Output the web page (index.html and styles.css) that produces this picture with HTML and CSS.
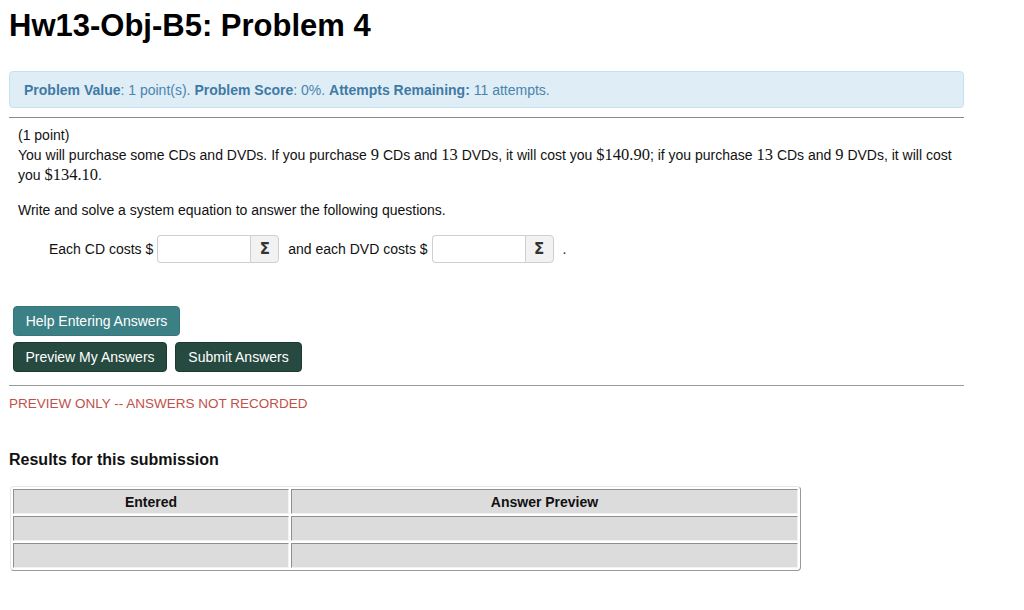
FILE: index.html
```html
<!DOCTYPE html>
<html lang="en">
<head>
  <meta charset="UTF-8" />
  <title>Hw13-Obj-B5: Problem 4</title>
  <link rel="stylesheet" href="styles.css">
</head>
<body>

  <h1 class="title">Hw13-Obj-B5: Problem 4</h1>

  <div class="info-box">
    <b>Problem Value</b>: 1 point(s). <b>Problem Score</b>: 0%. <b>Attempts Remaining:</b> 11 attempts.
  </div>

  <hr class="rule">

  <div class="problem">
    <div>(1 point)</div>
    <div class="problem-text">
      You will purchase some CDs and DVDs. If you purchase <span class="math">9</span> CDs and <span class="math">13</span> DVDs, it will cost you <span class="math">$140.90</span>; if you purchase <span class="math">13</span> CDs and <span class="math">9</span> DVDs, it will cost you <span class="math">$134.10</span>.
    </div>
    <p class="instructions">Write and solve a system equation to answer the following questions.</p>

    <div class="answer-row">
      <span>Each CD costs $</span>
      <span class="answer-group">
        <input type="text" class="answer-input">
        <button class="sigma-btn">&Sigma;</button>
      </span>
      <span>and each DVD costs $</span>
      <span class="answer-group">
        <input type="text" class="answer-input">
        <button class="sigma-btn">&Sigma;</button>
      </span>
      <span>.</span>
    </div>
  </div>

  <div class="buttons">
    <div><button class="btn btn-help">Help Entering Answers</button></div>
    <div class="btn-row">
      <button class="btn btn-dark">Preview My Answers</button>
      <button class="btn btn-dark">Submit Answers</button>
    </div>
  </div>

  <hr class="rule rule-second">

  <div class="preview-msg">PREVIEW ONLY -- ANSWERS NOT RECORDED</div>

  <h3 class="results-title">Results for this submission</h3>

  <table class="results">
    <tr>
      <th class="col-entered">Entered</th>
      <th>Answer Preview</th>
    </tr>
    <tr><td></td><td></td></tr>
    <tr><td></td><td></td></tr>
  </table>

</body>
</html>
```

FILE: styles.css
```css
body {
  margin: 0;
  padding: 0 9px;
  font-family: "Liberation Sans", Arial, sans-serif;
  font-size: 14px;
  color: #222;
  background-color: white;
  width: 955px;
}

.title {
  font-size: 31px;
  font-weight: bold;
  color: #000;
  margin: 9px 0 0 0;
  line-height: 34px;
}

.info-box {
  margin-top: 28px;
  height: 35px;
  line-height: 36px;
  padding: 0 14px;
  background-color: #dfedf7;
  border: 1px solid #c4e3ef;
  border-radius: 4px;
  color: #4a84ad;
}

.info-box b {
  color: #3f7aa4;
}

.rule {
  border: none;
  border-top: 1px solid #8a8a8a;
  margin: 9px 0 0 0;
}

.problem {
  padding: 7px 9px 0 9px;
  line-height: 20px;
  color: #111;
}

.math {
  display: inline-block;
  font-family: "Liberation Serif", "Times New Roman", serif;
  font-size: 16.5px;
  line-height: 16px;
}

.instructions {
  margin: 15px 0 0 0;
}

.answer-row {
  display: flex;
  align-items: center;
  gap: 4px;
  margin: 15px 0 0 31px;
}

.answer-group {
  display: inline-flex;
  height: 28px;
  margin-right: 5px;
}

.answer-input {
  width: 91px;
  height: 26px;
  padding: 0 0 0 1px;
  border: 1px solid #cfcfcf;
  border-right: none;
  border-radius: 4px 0 0 4px;
  margin: 0;
  box-sizing: content-box;
}

.sigma-btn {
  width: 29px;
  height: 28px;
  margin: 0;
  border: 1px solid #cfcfcf;
  border-radius: 0 4px 4px 0;
  background-color: #f2f2f2;
  font-family: "DejaVu Sans", sans-serif;
  font-size: 15px;
  font-weight: bold;
  color: #333;
  padding: 0;
}

.buttons {
  margin-top: 43px;
  padding-left: 4px;
}

.btn-row {
  display: flex;
  gap: 8px;
  margin-top: 6px;
}

.btn {
  font-family: "Liberation Sans", Arial, sans-serif;
  font-size: 14px;
  height: 30px;
  padding: 0 10px;
  border-radius: 4px;
  color: white;
  cursor: pointer;
}

.btn-help {
  background-color: #3b8085;
  border: 1px solid #36777b;
  width: 167px;
}

.btn-dark {
  background-color: #264a40;
  border: 1px solid #1d3a32;
}

.btn-row .btn:first-child {
  width: 154px;
}

.btn-row .btn:last-child {
  width: 127px;
}

.rule-second {
  border-top-color: #999;
  margin-top: 13px;
}

.preview-msg {
  color: #c1504b;
  font-size: 13.5px;
  margin-top: 10px;
  line-height: 16px;
}

.results-title {
  font-size: 16px;
  margin: 38px 0 0 0;
  line-height: 20px;
  color: #111;
}

.results {
  margin: 16px 0 0 1px;
  width: 791px;
  border: 1px solid #bbb;
  border-color: #e6e6e6 #999 #999 #e6e6e6;
  border-radius: 4px;
  border-spacing: 2px;
}

.results th,
.results td {
  background-color: #dcdcdc;
  height: 21px;
  border: 1px solid;
  border-color: #8f8f8f #f3f3f3 #f3f3f3 #8f8f8f;
  font-size: 14px;
  text-align: center;
  color: #111;
}

.col-entered {
  width: 272px;
}
```
